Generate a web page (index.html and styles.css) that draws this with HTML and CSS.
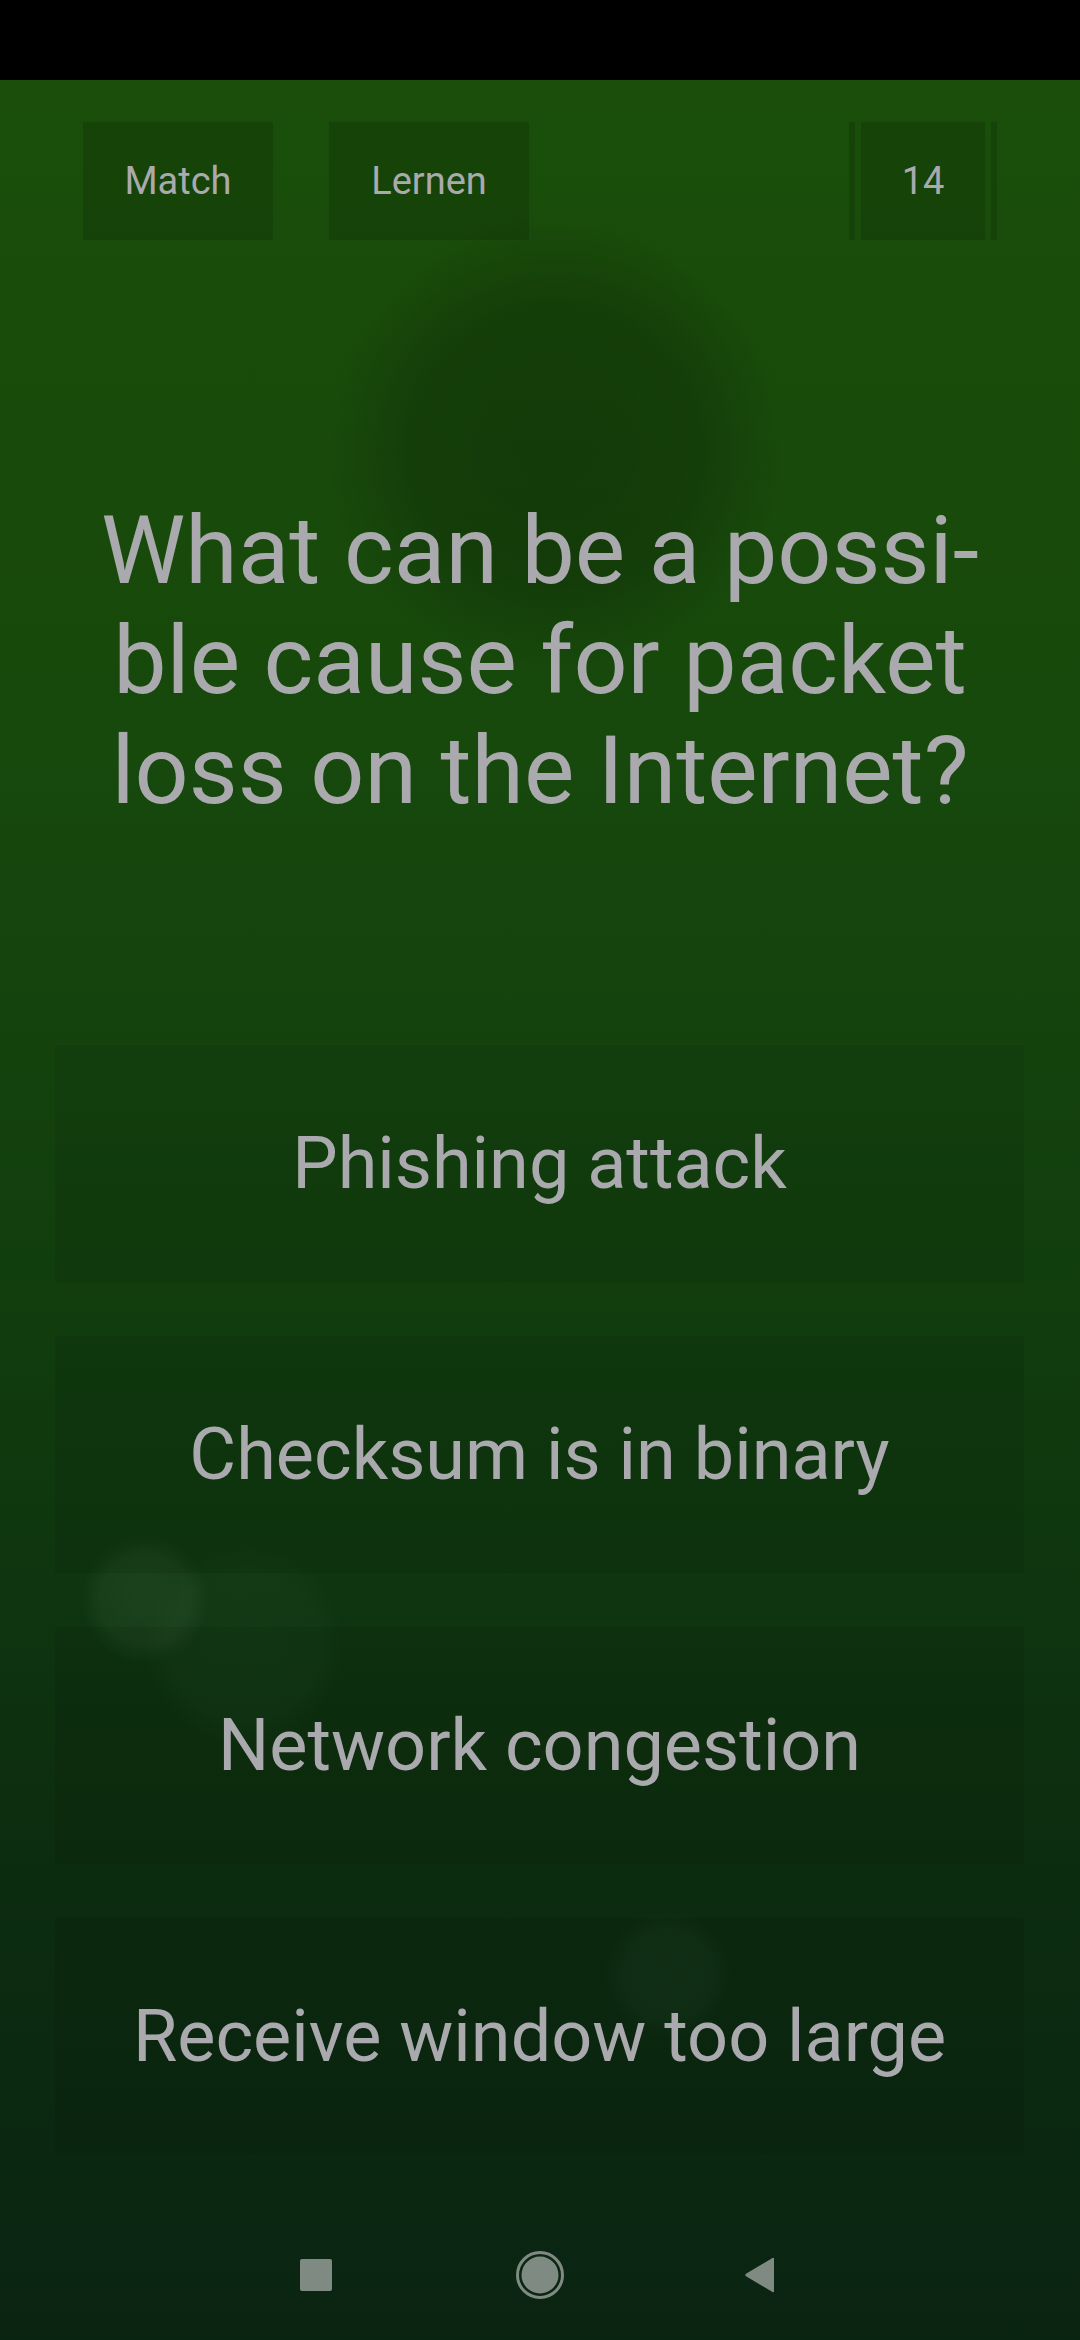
FILE: index.html
```html
<!DOCTYPE html>
<html lang="en">
<head>
<meta charset="utf-8">
<title>Quiz</title>
<link rel="stylesheet" href="styles.css">
</head>
<body>
<div class="status"></div>
<div class="screen">
  <div class="topbar">
    <div class="chip chip-match">Match</div>
    <div class="chip chip-learn">Lernen</div>
    <div class="spacer"></div>
    <div class="counter">
      <span class="bar"></span>
      <div class="chip chip-count">14</div>
      <span class="bar"></span>
    </div>
  </div>
  <h1 class="question">What can be a possi-<br>ble cause for packet<br>loss on the Internet?</h1>
  <div class="answers">
    <div class="answer">Phishing attack</div>
    <div class="answer">Checksum is in binary</div>
    <div class="answer">Network congestion</div>
    <div class="answer">Receive window too large</div>
  </div>
  <nav class="navbar">
    <svg class="nav-icon nav-recent" width="32" height="32" viewBox="0 0 32 32"><rect x="0" y="0" width="32" height="32" rx="2" fill="#7f8b82"/></svg>
    <svg class="nav-icon nav-home" width="48" height="48" viewBox="0 0 48 48"><circle cx="24" cy="24" r="22.5" fill="none" stroke="#7f8b82" stroke-width="3"/><circle cx="24" cy="24" r="18.5" fill="#7f8b82"/></svg>
    <svg class="nav-icon nav-back" width="32" height="36" viewBox="0 0 32 36"><path d="M30 2 L30 34 Q30 36 28.5 35 L2 19.2 Q0.5 18 2 16.8 L28.5 1 Q30 0 30 2 Z" fill="#7f8b82"/></svg>
  </nav>
</div>
</body>
</html>
```

FILE: styles.css
```css
html, body {
  margin: 0;
  padding: 0;
}
body {
  width: 1080px;
  height: 2340px;
  overflow: hidden;
  background: #000;
  font-family: Roboto, "Noto Sans", "Liberation Sans", sans-serif;
  color: #aaaaae;
}
.status {
  height: 80px;
  background: #000;
}
.screen {
  height: 2260px;
  box-sizing: border-box;
  padding-top: 42px;
  display: flex;
  flex-direction: column;
  background:
    radial-gradient(circle at 145px 1520px, rgba(120,160,120,0.12) 0, rgba(120,160,120,0.09) 45px, rgba(120,160,120,0) 64px),
    radial-gradient(circle at 245px 1565px, rgba(120,160,120,0.05) 0, rgba(120,160,120,0.04) 75px, rgba(120,160,120,0) 100px),
    radial-gradient(circle at 668px 1895px, rgba(120,160,120,0.07) 0, rgba(120,160,120,0.05) 45px, rgba(120,160,120,0) 64px),
    radial-gradient(circle at 555px 365px, rgba(0,0,0,0.22) 0, rgba(0,0,0,0.18) 140px, rgba(0,0,0,0) 230px),
    linear-gradient(180deg, #1a4e0a 0%, #17480c 30%, #113d0e 55%, #0c2c10 80%, #0a2412 100%);
}
.topbar {
  display: flex;
  align-items: stretch;
  height: 118px;
  padding: 0 83px;
}
.chip {
  display: flex;
  align-items: center;
  justify-content: center;
  background: rgba(0,0,0,0.13);
  font-size: 38px;
  color: #aaaaae;
}
.chip-match {
  width: 190px;
}
.chip-learn {
  width: 200px;
  margin-left: 56px;
}
.spacer {
  flex: 1;
}
.counter {
  display: flex;
  gap: 6px;
}
.bar {
  width: 6px;
  background: rgba(0,0,0,0.13);
}
.chip-count {
  width: 124px;
}
.question {
  margin: 256px 0 0;
  font-weight: 400;
  font-size: 95px;
  line-height: 110px;
  text-align: center;
  color: #aaaaae;
}
.answers {
  margin-top: 219px;
  padding: 0 56px 0 55px;
  display: flex;
  flex-direction: column;
  gap: 54px;
}
.answer {
  height: 237px;
  display: flex;
  align-items: center;
  justify-content: center;
  background: rgba(0,0,0,0.07);
  font-size: 72px;
  color: #aaaaae;
}
.navbar {
  margin-top: 96px;
  height: 48px;
  display: flex;
  align-items: center;
  padding-left: 300px;
}
.nav-home {
  margin-left: 184px;
}
.nav-back {
  margin-left: 180px;
}
```
